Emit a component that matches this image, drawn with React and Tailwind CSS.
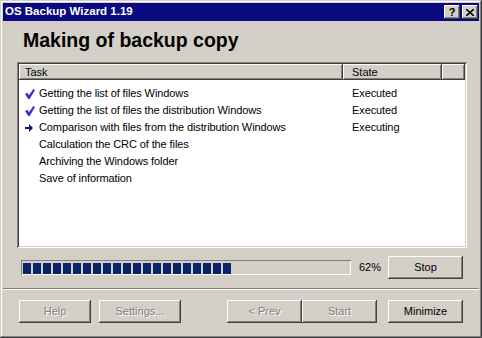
import React from 'react';

const raised =
  'shadow-[inset_-1px_-1px_#404040,inset_1px_1px_#ffffff,inset_-2px_-2px_#808080,inset_2px_2px_#d4d0c8]';

const Btn = ({ label, w, disabled }) => (
  <div
    className={`${w} h-[23px] flex items-center justify-center bg-[#d4d0c8] ${raised} text-[11px] ${
      disabled ? 'text-[#808080] [text-shadow:1px_1px_0_#ffffff]' : 'text-black'
    }`}
  >
    {label}
  </div>
);

const Check = () => (
  <svg width="10" height="10" viewBox="0 0 10 10">
    <polygon points="0,5 2.6,3.8 3.9,6.2 8.4,0 10,1.2 4.6,10 3.2,10" fill="#3434cc" />
  </svg>
);

const Arrow = () => (
  <svg width="8" height="8" viewBox="0 0 8 8">
    <polygon points="0,3 4,3 4,0 8,4 4,8 4,5 0,5" fill="#0a0a80" />
  </svg>
);

const rows = [
  { task: 'Getting the list of files Windows', state: 'Executed', icon: 'check' },
  { task: 'Getting the list of files the distribution Windows', state: 'Executed', icon: 'check' },
  { task: 'Comparison with files from the distribution Windows', state: 'Executing', icon: 'arrow' },
  { task: 'Calculation the CRC of the files', state: '' },
  { task: 'Archiving the Windows folder', state: '' },
  { task: 'Save of information', state: '' },
];

const headerCell =
  'h-[16px] flex items-center bg-[#d4d0c8] shadow-[inset_-1px_-1px_#404040,inset_1px_1px_#ffffff,inset_-2px_-2px_#808080]';

export default function App() {
  return (
    <div
      className="w-[482px] h-[338px] bg-[#d4d0c8] p-[3px] flex flex-col text-black shadow-[inset_-1px_-1px_#404040,inset_1px_1px_#d4d0c8,inset_-2px_-2px_#808080,inset_2px_2px_#ffffff]"
      style={{ fontFamily: '"Liberation Sans", Arial, sans-serif' }}
    >
      {/* title bar */}
      <div className="h-[18px] bg-[#0a0a80] flex items-center pl-[2px] pr-[1px]">
        <span className="text-white font-bold text-[11.5px] leading-none flex-1">OS Backup Wizard 1.19</span>
        <div className="flex gap-[2px]">
          <div className={`w-[16px] h-[14px] bg-[#d4d0c8] ${raised} flex items-center justify-center text-[11px] font-bold leading-none`}>
            ?
          </div>
          <div className={`w-[16px] h-[14px] bg-[#d4d0c8] ${raised} flex items-center justify-center`}>
            <svg width="8" height="7" viewBox="0 0 8 7">
              <path d="M0 0 L8 7 M8 0 L0 7" stroke="#000" strokeWidth="1.6" />
            </svg>
          </div>
        </div>
      </div>

      {/* heading */}
      <h1 className="mt-[8px] ml-[20px] h-[22px] text-[19.5px] leading-[22px] font-bold">Making of backup copy</h1>

      {/* task list */}
      <div className="mt-[11px] ml-[14px] w-[450px] h-[186px] bg-white p-[2px] shadow-[inset_1px_1px_#808080,inset_-1px_-1px_#ffffff,inset_2px_2px_#404040,inset_-2px_-2px_#d4d0c8]">
        <div className="flex text-[11px]">
          <div className={`${headerCell} w-[324px] pl-[6px]`}>Task</div>
          <div className={`${headerCell} w-[99px] pl-[9px]`}>State</div>
          <div className={`${headerCell} w-[23px]`}></div>
        </div>
        <div className="pt-[5px] text-[11px] tracking-[-0.1px]">
          {rows.map((r) => (
            <div key={r.task} className="h-[17px] flex items-center">
              <div className="w-[324px] flex items-center pl-[6px]">
                <div className="w-[14px] flex items-center">
                  {r.icon === 'check' && <Check />}
                  {r.icon === 'arrow' && <Arrow />}
                </div>
                <span className="whitespace-nowrap">{r.task}</span>
              </div>
              <div className="pl-[9px]">{r.state}</div>
            </div>
          ))}
        </div>
      </div>

      {/* progress */}
      <div className="mt-[8px] ml-[18px] flex items-center">
        <div className="w-[330px] h-[15px] p-[1px] pl-[2px] shadow-[inset_1px_1px_#808080,inset_-1px_-1px_#ffffff] flex items-center">
          <div className="flex gap-[2px] h-[11px] mt-[1px]">
            {Array.from({ length: 21 }).map((_, i) => (
              <div key={i} className="w-[8px] h-[11px] bg-[#0a246a]" />
            ))}
          </div>
        </div>
        <span className="ml-[8px] w-[29px] text-[11px]">62%</span>
        <Btn label="Stop" w="w-[75px]" />
      </div>

      {/* separator */}
      <div className="mt-[9px] h-[2px] border-t border-t-[#808080] border-b border-b-white" />

      {/* bottom buttons */}
      <div className="mt-[10px] ml-[16px] flex">
        <Btn label="Help" w="w-[72px]" disabled />
        <div className="ml-[8px]">
          <Btn label="Settings..." w="w-[82px]" disabled />
        </div>
        <div className="ml-[46px]">
          <Btn label="< Prev" w="w-[75px]" disabled />
        </div>
        <Btn label="Start" w="w-[75px]" disabled />
        <div className="ml-[11px]">
          <Btn label="Minimize" w="w-[75px]" />
        </div>
      </div>
    </div>
  );
}
